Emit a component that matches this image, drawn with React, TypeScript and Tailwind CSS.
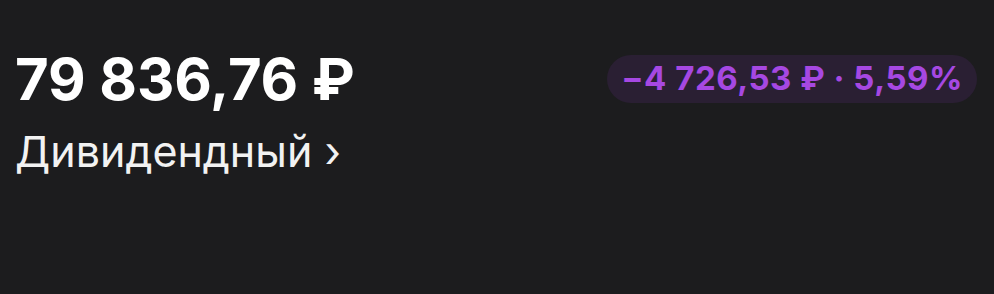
import React from 'react';

const App = () => {
  return (
    <div
      className="w-[994px] h-[294px] bg-[#1c1c1e] text-white px-[15px] pt-[44px]"
      style={{ fontFamily: 'Inter, "Noto Sans", sans-serif' }}
    >
      <div className="flex items-start justify-between">
        <div className="flex flex-col">
          {/* Balance */}
          <div className="text-[58px] leading-[70px] font-bold tracking-[-0.1px]">
            79 836,76 ₽
          </div>
          {/* Portfolio name */}
          <div className="mt-[11px] text-[43px] leading-[52px] text-[#f2f2f2]">
            Дивидендный ›
          </div>
        </div>

        {/* Change pill */}
        <div className="mt-[11px] mr-[2px] h-[48px] px-[14px] rounded-full bg-[#2a1f33] flex items-center">
          <span className="text-[33px] font-bold tracking-[0.5px] text-[#a648e2]">
            −4 726,53 ₽ · 5,59%
          </span>
        </div>
      </div>
    </div>
  );
};

export default App;
